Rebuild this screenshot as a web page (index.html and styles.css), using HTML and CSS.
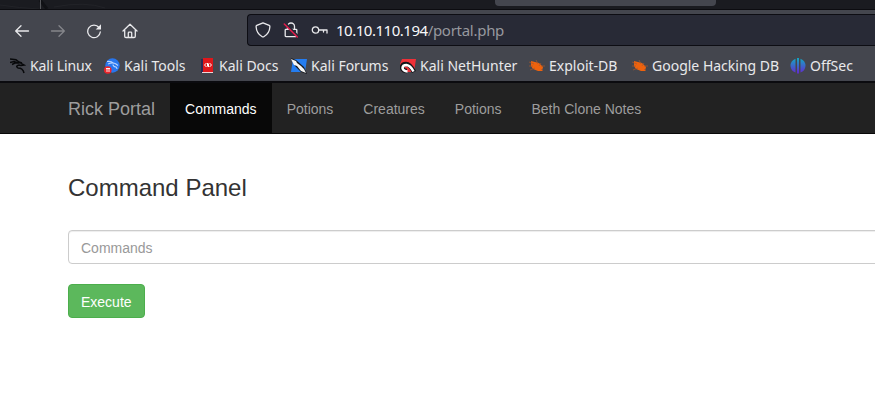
FILE: index.html
```html
<!DOCTYPE html>
<html lang="en">
<head>
<meta charset="utf-8">
<title>Rick Portal</title>
<link rel="stylesheet" href="styles.css">
</head>
<body>
<header class="browser">
  <div class="tabs">
    <svg class="tab-art" width="130" height="9" viewBox="0 0 130 9" fill="none"><path d="M0 5Q20 8 39 9M54 7Q85 1 105 8" stroke="#222328"/><path d="M40 0l7 9" stroke="#101115" stroke-width="3"/><path d="M40.5 0v9" stroke="#56575b"/></svg>
    <div class="active-tab"></div>
  </div>
  <div class="toolbar">
    <div class="tools">
      <svg width="16" height="16" viewBox="0 0 16 16"><path d="M14.500 8H2M7 2.700L1.700 8 7 13.300"/></svg>
      <svg class="dim" width="16" height="16" viewBox="0 0 16 16"><path d="M1.500 8H14M9 2.700L14.300 8 9 13.300"/></svg>
      <svg width="16" height="16" viewBox="0 0 16 16"><path d="M13 4.500A6.300 6.300 0 1 0 14.300 9"/><path class="solid" d="M15 1.200v5.300H9.700z"/></svg>
      <svg width="16" height="16" viewBox="0 0 16 16"><path d="M1 8l7-6.700L15 8M2.700 7v6.200q0 1.300 1.300 1.300h8q1.300 0 1.300-1.300V7M6.300 14V10q0-.8.8-.8h1.800q.8 0 .8.8v4"/></svg>
    </div>
    <div class="address">
      <svg width="16" height="16" viewBox="0 0 16 16"><path d="M8 .8l6.200 2.600q.8.400.7 1.300-.4 6.800-6.100 10-.8.500-1.600 0-5.700-3.200-6.100-10-.1-.9.700-1.300z"/></svg>
      <svg width="16" height="16" viewBox="0 0 16 16"><path d="M4.500 7V4.500a3.500 3.500 0 0 1 7 0V7M3 7.300h10q.8 0 .8.800v5.700q0 .8-.8.800H3q-.8 0-.8-.8V8.100q0-.8.8-.8z"/><path class="cover" d="M3 2.500L14.500 14"/><path class="slash" d="M1.300 2l13 13"/></svg>
      <svg width="18" height="16" viewBox="0 0 18 16"><circle cx="4.500" cy="8" r="3.200"/><path d="M8 8h8v3M12.500 8v2"/></svg>
      <div class="url"><b>10.10.110.194</b>/portal.php</div>
    </div>
  </div>
  <div class="bookmarks">
    <div><svg width="16" height="16" viewBox="0 0 16 16"><path class="dragon" d="M0 1l6 .8 3 2.200M0 4.500l4-1 4 1.500M2 6.500l3-1.500 3 0q3-1 4 1l2 1-3 .5-2-.5q-4 1-1 3 5 0 6 5M9 4l3 1"/></svg><span class="b1">Kali Linux</span></div>
    <div><svg width="16" height="16" viewBox="0 0 16 16"><circle cx="8.500" cy="7.500" r="7.200" fill="#2876ee"/><path d="M3 3.500q4-.5 7 2M4 6q5-2 8 0l2 1.500M9 6.500q0 2 3 2.500 1 1 1 2" fill="none" stroke="#b8d4ff" stroke-width="1.100"/><circle cx="3.800" cy="12" r="3.800" fill="#ed252a"/><path d="M2 10.500h4M3 10.500v3.500M5 10.500v3.500" stroke="#fff" stroke-width=".9"/></svg><span>Kali Tools</span></div>
    <div><svg width="16" height="16" viewBox="0 0 16 16"><path fill="#292b55" d="M2 1h3v14H2z"/><path fill="#df171b" d="M4 0h10v15H4z"/><path fill="#f2d6d8" d="M3 14h11v1H3z"/><path d="M7.500 5L5.500 7l2 2M10.500 5l2 2-2 2M8.500 5v3.500M9.500 5.500V9" fill="none" stroke="#fff" stroke-width="1"/></svg><span>Kali Docs</span></div>
    <div><svg width="16" height="16" viewBox="0 0 16 16"><path fill="#247df1" d="M2 1h14l-2 13H0z"/><path fill="#15171c" d="M0 0l5 2 8 7 3 7-6-2-6-6z"/><path fill="#f5f5f5" d="M0 1l5 2 1 2 4 3 3 3 2 4-5-2-4-5-3-1z"/></svg><span>Kali Forums</span></div>
    <div><svg width="16" height="16" viewBox="0 0 16 16"><path fill="#ef3038" d="M2 1h14l-2 13H2L0 6z"/><path d="M7 13q-4 0-5-3 0-4 4-4 4 0 8 8" fill="none" stroke="#111318" stroke-width="4.500"/><path d="M7.500 13.500Q3 13 2.500 10q0-3 4-3 4 .5 7 6.500" fill="none" stroke="#fff" stroke-width="2.500"/></svg><span>Kali NetHunter</span></div>
    <div><svg width="16" height="16" viewBox="0 0 16 16"><path fill="#ee620d" d="M2 3l4 1 4 1 4 4-1 4-4 0-5-2-2-3z"/><path class="legs" d="M0 4l5 2M0 8l4 0M1 12l5-2M7 2l2 4M12 5l-2 3M12 8h4M12 11l2 2"/></svg><span>Exploit-DB</span></div>
    <div><svg width="16" height="16" viewBox="0 0 16 16"><path fill="#ee620d" d="M2 3l4 1 4 1 4 4-1 4-4 0-5-2-2-3z"/><path class="legs" d="M0 4l5 2M0 8l4 0M1 12l5-2M7 2l2 4M12 5l-2 3M12 8h4M12 11l2 2"/></svg><span>Google Hacking DB</span></div>
    <div><svg width="16" height="16" viewBox="0 0 16 16"><defs><linearGradient id="g" gradientUnits="userSpaceOnUse" x1="0" y1="0" x2="0" y2="15"><stop stop-color="#12a9c2"/><stop offset="1" stop-color="#612bd0"/></linearGradient></defs><path fill="url(#g)" d="M5.500 .7v13.800Q1 13 .5 8 .5 2.500 5.500 .7zM10.500 .7v13.800q4.500-1.500 5-6.500Q15.500 2.500 10.500 .7zM7 0h2v15.500H7z"/></svg><span>OffSec</span></div>
  </div>
</header>
<nav class="navbar">
  <a class="brand">Rick Portal</a>
  <a class="active">Commands</a><a>Potions</a><a>Creatures</a><a>Potions</a><a>Beth Clone Notes</a>
</nav>
<main>
  <h3>Command Panel</h3>
  <input type="text" placeholder="Commands">
  <button>Execute</button>
</main>
</body>
</html>
```
FILE: styles.css
```css
* { box-sizing: border-box; }
body { margin: 0; height: 419px; overflow: hidden; background: #fff; font: 14px/20px "Liberation Sans", Arial, sans-serif; color: #333; }
svg { display: block; flex: none; }
.browser { height: 83px; background: #44464e; border-bottom: 2px solid #0b0b0f; font-family: "Noto Sans", sans-serif; color: #e9e9eb; }
.tabs { display: flex; height: 10px; background: #1a1b20; border-bottom: 1px solid #0c0c10; }
.active-tab { width: 221px; height: 6px; margin-left: 365px; background: #44464e; border-radius: 0 0 4px 4px; }
.toolbar { display: flex; height: 40px; padding-top: 4px; }
.tools { display: flex; width: 247px; padding: 9px 0 0 14px; gap: 20px; }
.tools svg, .address svg { fill: none; stroke: #e9e9ec; stroke-width: 1.3; stroke-linejoin: round; stroke-linecap: round; }
.tools .dim { stroke: #85868b; }
.tools .solid { fill: #e9e9ec; stroke: none; }
.address { display: flex; align-items: center; flex: 1; height: 32px; padding-left: 7px; background: #282a36; border: 1px solid #0d0d13; border-right: 0; border-radius: 4px 0 0 4px; }
.address svg + svg { margin-left: 12px; }
.address .cover { stroke: #282a36; stroke-width: 3; }
.address .slash { stroke: #e51c4c; stroke-width: 1.5; }
.url { margin-left: 7px; color: #97989e; font-size: 15px; letter-spacing: -.28px; white-space: nowrap; }
.url b { color: #f8f8fa; font-weight: 400; letter-spacing: -.48px; }
.bookmarks { display: grid; grid-template-columns: 94px 95px 92px 109px 129px 103px 158px 85px; height: 31px; padding-left: 10px; }
.bookmarks div { display: flex; align-items: center; gap: 4px; white-space: nowrap; font-size: 14px; }
.bookmarks .b1 { letter-spacing: -.12px; }
.dragon { fill: none; stroke: #08090b; stroke-width: 1.5; }
.legs { fill: none; stroke: #a9592d; stroke-width: .7; }
.navbar { display: flex; height: 51px; padding-left: 53px; background: #222; border-bottom: 1px solid #080808; }
.navbar a { padding: 16px 15px 14px; color: #9d9d9d; white-space: nowrap; }
.navbar .brand { font-size: 18px; }
.navbar .active { color: #fff; background: #080808; }
main { padding: 40px 0 0 68px; }
h3 { margin: 0 0 29px; font-size: 24px; line-height: 27px; font-weight: 400; }
input { display: block; width: 830px; height: 34px; padding: 7px 12px 5px; font: inherit; border: 1px solid #ccc; border-radius: 4px; box-shadow: inset 0 1px 1px rgba(0,0,0,.075); }
input::placeholder { color: #999; opacity: 1; }
button { display: block; height: 34px; margin-top: 20px; padding: 7px 12px 5px; font: inherit; color: #fff; background: #5cb85c; border: 1px solid #4cae4c; border-radius: 4px; }
```
